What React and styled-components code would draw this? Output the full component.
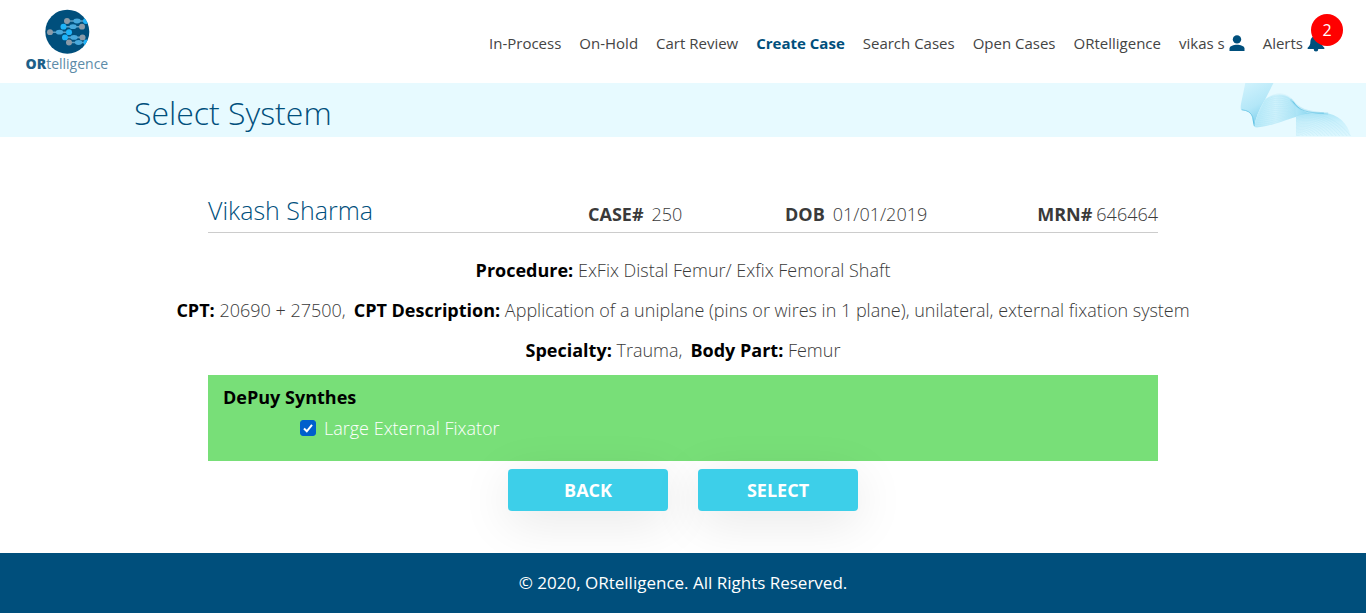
import React from "react";
import styled, { createGlobalStyle } from "styled-components";

const GlobalStyle = createGlobalStyle`
  *, *::before, *::after { box-sizing: border-box; }
  body {
    margin: 0;
    background: #fff;
    color: #3a3a3a;
    font-family: "Open Sans", "Noto Sans", sans-serif;
    font-size: 18px;
    font-weight: 350;
    line-height: 24px;
  }
`;

const Page = styled.div`
  display: flex;
  flex-direction: column;
  min-height: 100vh;
`;

const Header = styled.header`
  display: flex;
  align-items: center;
  justify-content: space-between;
  height: 83px;
  padding: 0 41px 0 24px;
`;

const LogoLink = styled.a`
  display: block;
  line-height: 0;
`;

const Nav = styled.nav`
  display: flex;
  align-items: center;
  gap: 18px;
  padding-top: 2px;
`;

const NavLink = styled.a`
  position: relative;
  display: flex;
  align-items: center;
  gap: 4px;
  font-size: 15px;
  white-space: nowrap;
  text-decoration: none;
  color: ${(p) => (p.$active ? "#004f7c" : "#444")};
  font-weight: ${(p) => (p.$active ? 700 : 400)};
`;

const Badge = styled.span`
  position: absolute;
  top: -17px;
  right: -18px;
  width: 32px;
  height: 32px;
  border-radius: 50%;
  background: #f00;
  color: #fff;
  font-size: 16px;
  line-height: 32px;
  text-align: center;
`;

const Banner = styled.div`
  display: flex;
  justify-content: space-between;
  height: 54px;
  padding: 0 15px 0 134px;
  background: #e7faff;
`;

const Title = styled.h1`
  margin: 0;
  font-size: 32px;
  font-weight: 300;
  line-height: 60px;
  color: #004f7c;
`;

const Main = styled.main`
  flex: 1;
  display: flex;
  flex-direction: column;
  align-items: center;
  padding: 54px 16px 42px;
`;

const PatientRow = styled.section`
  display: grid;
  grid-template-columns: 380fr 197fr 180fr 193fr;
  align-items: center;
  width: 100%;
  max-width: 950px;
  height: 42px;
  border-bottom: 1px solid #ccc;
`;

const PatientName = styled.h2`
  margin: 0;
  padding-bottom: 4px;
  font-size: 25px;
  font-weight: 300;
  line-height: 36px;
  color: #004f7c;
`;

const Fact = styled.div`
  display: flex;
  gap: ${(p) => (p.$end ? "4px" : "8px")};
  justify-content: ${(p) => (p.$end ? "flex-end" : "flex-start")};
  padding-top: 4px;
`;

const Details = styled.section`
  display: flex;
  flex-direction: column;
  gap: 16px;
  padding: 25px 0 13px;
  text-align: center;
`;

const Line = styled.p`
  margin: 0;

  b { color: #000; }
  span + b { margin-left: 8px; }
`;

const VendorPanel = styled.section`
  width: 100%;
  max-width: 950px;
  padding: 10px 15px 21px;
  background: #78df78;
`;

const VendorName = styled.h3`
  margin: 0;
  font-size: 18px;
  font-weight: 700;
  line-height: 24px;
  color: #000;
`;

const Option = styled.label`
  display: flex;
  align-items: center;
  gap: 8px;
  width: max-content;
  margin: 7px 0 0 77px;
  color: #fff;
`;

const Checkbox = styled.input`
  appearance: none;
  width: 16px;
  height: 16px;
  margin: 0;
  border: 1px solid #767676;
  border-radius: 3px;
  background: #fff;

  &:checked {
    border-color: #005fcc;
    background: #005fcc url("data:image/svg+xml,%3Csvg xmlns='http://www.w3.org/2000/svg' viewBox='0 0 14 14'%3E%3Cpath d='M3 7.5l2.8 2.8L11 3.8' fill='none' stroke='white' stroke-width='2'/%3E%3C/svg%3E") center / 14px no-repeat;
  }
`;

const Actions = styled.div`
  display: flex;
  gap: 30px;
  margin-top: 8px;
`;

const ActionButton = styled.button`
  width: 160px;
  height: 42px;
  padding: 0;
  border: 0;
  border-radius: 4px;
  background: #3dcfe9;
  box-shadow: 0 10px 50px rgba(0, 0, 0, 0.1);
  color: #fff;
  font: inherit;
  font-weight: 700;
  cursor: pointer;
`;

const Footer = styled.footer`
  display: flex;
  align-items: center;
  justify-content: center;
  height: 60px;
  background: #004f7c;
  color: #fff;
  font-size: 17px;
  font-weight: 400;
`;

const GREY = "#8b9ba8";
const MID = "#48a9dc";
const BRIGHT = "#1eb4fa";

const dendrites = [
  { y: 21, dots: [[67, GREY], [77, MID], [86, BRIGHT]] },
  { y: 26.7, dots: [[63.5, BRIGHT], [73, MID], [82, GREY]] },
  { y: 32.2, dots: [[50, GREY], [59.5, MID], [69, BRIGHT]] },
  { y: 37.4, dots: [[65, BRIGHT], [74, MID], [82.5, GREY]] },
  { y: 42.5, dots: [[69, GREY], [78.5, MID], [86.5, BRIGHT]] },
];

function Logo() {
  return (
    <svg width="88" height="74" viewBox="24 5 88 74" role="img" aria-label="ORtelligence">
      <defs>
        <clipPath id="disc"><circle cx="67.3" cy="31.7" r="22" /></clipPath>
      </defs>
      <circle cx="67.3" cy="31.7" r="22" fill="#004f7c" />
      <g clipPath="url(#disc)">
        {dendrites.map(({ y, dots }) => (
          <g key={y}>
            <path d={`M${dots[0][0]} ${y}H${dots[2][0]}`} stroke="#5d9cc0" strokeWidth="1.6" />
            {dots.map(([x, fill], i) => (
              <ellipse key={x} cx={x} cy={y} rx={i === 1 ? 3.6 : 3} ry={i === 1 ? 2.4 : 2.9} fill={fill} />
            ))}
          </g>
        ))}
      </g>
      <text x="25.5" y="69" fontFamily="Open Sans, sans-serif" fontSize="14" fontWeight="400" fill="#5d8ba8">
        <tspan fontWeight="800" fill="#1d5f88">OR</tspan>telligence
      </text>
    </svg>
  );
}

// Blends two cubic curves, each a list of x,y values, into a family of strands.
const strands = (from, to, count) =>
  Array.from({ length: count }, (_, i) => {
    const t = i / (count - 1);
    const p = from.map((v, k) => (v + (to[k] - v) * t).toFixed(1));
    return `M${p[0]} ${p[1]}C${p.slice(2).join(" ")}`;
  }).join("");

function Wave() {
  return (
    <svg width="111" height="53" viewBox="60 37 333 160" aria-hidden="true">
      <defs>
        <linearGradient id="sheet" x1="0.3" y1="0" x2="0.7" y2="1">
          <stop offset="0" stopColor="#cdf1fc" />
          <stop offset="0.5" stopColor="#b3e7f8" />
          <stop offset="1" stopColor="#74cbea" />
        </linearGradient>
        <linearGradient id="fold" x1="0" y1="0" x2="1" y2="0">
          <stop offset="0" stopColor="#b4e8f8" />
          <stop offset="0.35" stopColor="#cff2fc" />
          <stop offset="0.65" stopColor="#b4e8f8" />
          <stop offset="1" stopColor="#7fd2ee" />
        </linearGradient>
        <linearGradient id="tail" x1="0" y1="0" x2="0" y2="1">
          <stop offset="0" stopColor="#aee6f7" />
          <stop offset="0.4" stopColor="#ccf1fc" />
          <stop offset="1" stopColor="#dcf7fe" />
        </linearGradient>
      </defs>
      <path d="M75 37H160L134 88Q108 130 102 168Q96 150 97 140Q92 120 62 118Q60 112 62 100Z" fill="url(#sheet)" />
      <path d="M102 168Q108 130 134 88C155 70 190 64 212 84C235 108 240 128 285 128C220 134 165 166 120 170Q105 173 102 168Z" fill="url(#fold)" />
      <path d="M228 137Q260 128 310 127C355 130 385 160 393 197H228Z" fill="url(#tail)" />
      <g fill="none" stroke="#8ad6ef" strokeWidth="0.8" opacity="0.5">
        <path d={strands([134, 88, 180, 52, 215, 78, 225, 98], [102, 168, 130, 172, 180, 155, 228, 137], 16)} />
        <path d={strands([228, 137, 260, 128, 330, 118, 393, 197], [228, 197, 230, 195, 236, 195, 240, 197], 15)} />
      </g>
      <g fill="none" stroke="#3fb3dc">
        <path d="M64 118Q91 120 97 140L102 167" strokeWidth="3" opacity="0.6" />
        <path d="M212 86C235 118 262 127 325 129" strokeWidth="7" opacity="0.2" />
        <path d="M218 92C238 122 262 127 312 128" strokeWidth="3" opacity="0.5" />
      </g>
    </svg>
  );
}

const UserIcon = () => (
  <svg width="16" height="16" viewBox="0 0 16 16" fill="#004f7c" aria-hidden="true">
    <circle cx="8" cy="4.4" r="4.2" />
    <path d="M0.5 16v-2.4C0.5 11 4.8 9.8 8 9.8s7.5 1.2 7.5 3.8V16z" />
  </svg>
);

const BellIcon = () => (
  <svg width="18" height="18" viewBox="0 0 18 18" fill="#004f7c" aria-hidden="true">
    <path d="M9 0.5a1.4 1.4 0 0 1 1.4 1.6C13 2.8 14.6 5 14.6 7.6c0 3.4 1 4.8 2.7 6.2.4.4.2 1.2-.5 1.2H1.2c-.7 0-.9-.8-.5-1.2 1.7-1.4 2.7-2.8 2.7-6.2C3.4 5 5 2.8 7.6 2.1A1.4 1.4 0 0 1 9 .5zM6.7 15h4.6a2.3 2.5 0 0 1-4.6 0z" />
  </svg>
);

const links = ["In-Process", "On-Hold", "Cart Review", "Create Case", "Search Cases", "Open Cases", "ORtelligence"];

export default function App() {
  return (
    <Page>
      <GlobalStyle />
      <Header>
        <LogoLink href="#home"><Logo /></LogoLink>
        <Nav>
          {links.map((name) => (
            <NavLink key={name} href="#nav" $active={name === "Create Case"}>{name}</NavLink>
          ))}
          <NavLink href="#profile">vikas s <UserIcon /></NavLink>
          <NavLink href="#alerts">Alerts <BellIcon /><Badge>2</Badge></NavLink>
        </Nav>
      </Header>
      <Banner>
        <Title>Select System</Title>
        <Wave />
      </Banner>
      <Main>
        <PatientRow>
          <PatientName>Vikash Sharma</PatientName>
          <Fact><b>CASE#</b><span>250</span></Fact>
          <Fact><b>DOB</b><span>01/01/2019</span></Fact>
          <Fact $end><b>MRN#</b><span>646464</span></Fact>
        </PatientRow>
        <Details>
          <Line><b>Procedure:</b> ExFix Distal Femur/ Exfix Femoral Shaft</Line>
          <Line>
            <b>CPT:</b> <span>20690 + 27500,</span><b>CPT Description:</b> Application of a uniplane (pins or wires in 1 plane), unilateral, external fixation system
          </Line>
          <Line><b>Specialty:</b> <span>Trauma,</span><b>Body Part:</b> Femur</Line>
        </Details>
        <VendorPanel>
          <VendorName>DePuy Synthes</VendorName>
          <Option><Checkbox type="checkbox" defaultChecked />Large External Fixator</Option>
        </VendorPanel>
        <Actions>
          <ActionButton type="button">BACK</ActionButton>
          <ActionButton type="button">SELECT</ActionButton>
        </Actions>
      </Main>
      <Footer>© 2020, ORtelligence. All Rights Reserved.</Footer>
    </Page>
  );
}
